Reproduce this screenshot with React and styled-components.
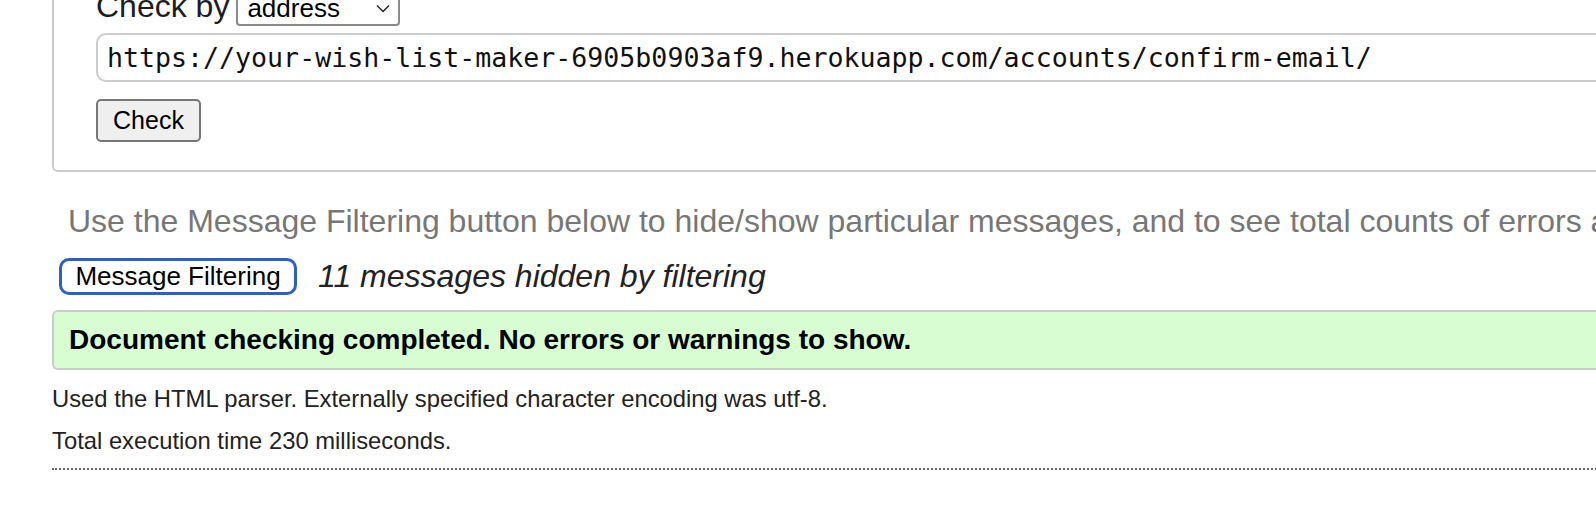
import React from 'react'
import styled, { createGlobalStyle } from 'styled-components'

const GlobalStyle = createGlobalStyle`
    html, body {
        margin: 0;
        padding: 0;
        background: #fff;
        overflow: hidden;
    }
    body {
        font-family: "Liberation Sans", Arial, sans-serif;
        color: #222;
    }
`;

const Page = styled.div`
    margin-top: -20px;
    padding-left: 52px;
    width: 1700px;
`;

const CheckForm = styled.fieldset`
    margin: 0;
    padding: 8px 0 28px 42px;
    border: 2px solid #ccc;
    border-radius: 6px;

    .row{
        display: flex;
        align-items: baseline;
        gap: 7px;
        font-size: 32px;
        line-height: 32px;
        color: #1d1d1f;
    }
`;

const Select = styled.div`
    display: flex;
    align-items: center;
    justify-content: space-between;
    box-sizing: border-box;
    width: 164px;
    height: 34px;
    padding: 0 8px 0 9px;
    border: 2px solid #8a8a8a;
    border-radius: 4px;
    font-size: 26px;
    line-height: 29px;
    color: #000;
`;

const UrlInput = styled.div`
    box-sizing: border-box;
    margin-top: 7px;
    height: 49px;
    padding: 0 9px;
    display: flex;
    align-items: center;
    border: 2px solid #ccc;
    border-right: none;
    border-radius: 10px 0 0 10px;
    font-family: "DejaVu Sans Mono", "Liberation Mono", monospace;
    font-size: 26.6px;
    color: #111;
`;

const Button = styled.button`
    box-sizing: border-box;
    display: block;
    margin: 17px 0 0;
    width: 105px;
    height: 43px;
    padding: 0;
    background: #efefef;
    border: 2px solid #767676;
    border-radius: 5px;
    font-family: "Liberation Sans", Arial, sans-serif;
    font-size: 25px;
    color: #000;
`;

const Hint = styled.p`
    margin: 31px 0 0 16px;
    font-size: 32px;
    line-height: 37px;
    color: #777;
    white-space: nowrap;
`;

const FilterRow = styled.div`
    display: flex;
    align-items: center;
    height: 37px;
    margin: 18px 0 0 7px;
    gap: 21px;
`;

const FilterButton = styled.button`
    box-sizing: border-box;
    width: 238px;
    height: 37px;
    padding: 0;
    background: #fff;
    border: 3px solid #2c5fcc;
    border-radius: 10px;
    font-family: "Liberation Sans", Arial, sans-serif;
    font-size: 26px;
    color: #000;
`;

const Hidden = styled.em`
    font-size: 32px;
    line-height: 37px;
    color: #222;
`;

const Success = styled.div`
    box-sizing: border-box;
    margin-top: 15px;
    height: 60px;
    display: flex;
    align-items: center;
    padding-left: 15px;
    background: #d8fdd3;
    border: 2px solid #ccc;
    border-right: none;
    border-radius: 6px 0 0 6px;
    font-size: 28px;
    font-weight: 700;
    color: #000;
`;

const Note = styled.p`
    margin: ${p => p.$first ? '15px' : '14px'} 0 0;
    font-size: 23.8px;
    line-height: 28px;
    color: #222;
`;

const Rule = styled.hr`
    margin: 13px 0 0;
    border: none;
    border-top: 2px dotted #666;
`;

const Chevron = () => (
    <svg width="14" height="9" viewBox="0 0 14 9" fill="none">
        <path d="M1 1.5 L7 7.5 L13 1.5" stroke="#222" strokeWidth="1.5" />
    </svg>
)

const App = () => {
    return (
    <Page>
        <GlobalStyle />
        <CheckForm>
            <div className="row">
                Check by
                <Select>address<Chevron /></Select>
            </div>
            <UrlInput>https://your-wish-list-maker-6905b0903af9.herokuapp.com/accounts/confirm-email/</UrlInput>
            <Button>Check</Button>
        </CheckForm>
        <Hint>Use the Message Filtering button below to hide/show particular messages, and to see total counts of errors and warnings.</Hint>
        <FilterRow>
            <FilterButton>Message Filtering</FilterButton>
            <Hidden>11 messages hidden by filtering</Hidden>
        </FilterRow>
        <Success>Document checking completed. No errors or warnings to show.</Success>
        <Note $first>Used the HTML parser. Externally specified character encoding was utf-8.</Note>
        <Note>Total execution time 230 milliseconds.</Note>
        <Rule />
    </Page>
    )
}

export default App
